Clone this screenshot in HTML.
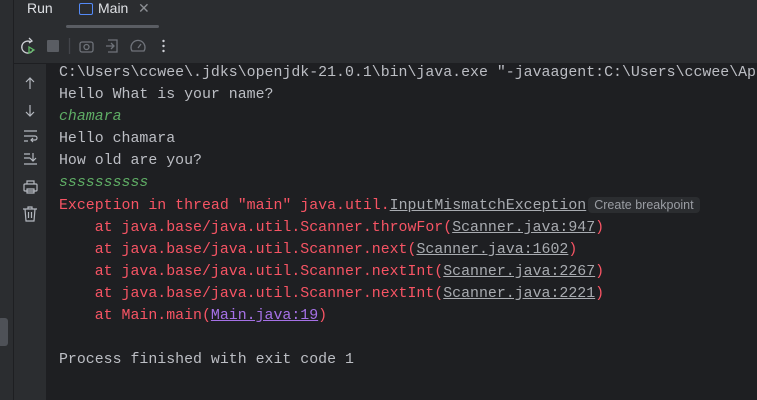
<!DOCTYPE html>
<html><head><meta charset="utf-8"><style>
body{margin:0;width:757px;height:400px;background:#1e1f22;overflow:hidden;font-family:"Liberation Sans",sans-serif;position:relative}
.top{position:absolute;left:0;top:0;width:757px;height:63px;background:#2b2d30;border-bottom:1px solid #1e1f22}
.strip{position:absolute;left:0;top:0;width:13px;height:400px;background:#2b2d30;border-right:1px solid #1e1f22}
.gut{position:absolute;left:14px;top:64px;width:32px;height:336px;background:#2b2d30}
.con{position:absolute;left:59px;top:62px;font-family:"Liberation Mono",monospace;font-size:14.9px;line-height:22px;color:#bcbec4;white-space:pre}
.g{color:#5fad65;font-style:italic}.r{color:#f75464}.u{color:#a8abb0;text-decoration:underline}
.m{color:#a571e6;text-decoration:underline}
.bp{font-family:"Liberation Sans",sans-serif;font-size:12.5px;color:#9a9da3;background:#2b2d30;border-radius:4px;padding:1px 6px;margin-left:2px}
svg{position:absolute}
</style></head><body>
<div class="top"></div>
<div class="strip"></div>
<div style="position:absolute;left:27px;top:0;color:#dfe1e5;font-size:14px;line-height:17px">Run</div>
<div style="position:absolute;left:79px;top:3px;width:12px;height:10px;border:1px solid #548af7;border-radius:2px"></div>
<div style="position:absolute;left:98px;top:0;color:#dfe1e5;font-size:14px;line-height:17px">Main</div>
<div style="position:absolute;left:138px;top:0;color:#8c8f94;font-size:14px;line-height:17px">✕</div>
<div style="position:absolute;left:66px;top:25px;width:93px;height:3px;background:#5a5d63;border-radius:2px"></div>
<svg width="757" height="64" style="left:0;top:0" fill="none" stroke-width="1.3">
<path d="M31 42a6 6 0 1 0 2 8" stroke="#ced0d6"/><path d="M29 38l3 3-3 2" stroke="#ced0d6"/><path d="M29 47v6l5-3z" stroke="#5fb865"/>
<rect x="47" y="40" width="12" height="12" rx="1" fill="#5a5d63" stroke="none"/>
<line x1="69.5" y1="38" x2="69.5" y2="54" stroke="#43454a"/>
<rect x="80" y="42" width="13" height="10" rx="2" stroke="#6f737a"/><circle cx="86.5" cy="47" r="2.5" stroke="#6f737a"/>
<path d="M108 40h9v12h-9M106 46h7m-2-3l3 3-3 3" stroke="#6f737a"/>
<path d="M132 51a7 7 0 1 1 12 0z M138 48l3-4" stroke="#6f737a"/>
<circle cx="163.5" cy="41" r="1.2" fill="#ced0d6" stroke="none"/><circle cx="163.5" cy="46" r="1.2" fill="#ced0d6" stroke="none"/><circle cx="163.5" cy="51" r="1.2" fill="#ced0d6" stroke="none"/>
</svg>
<div class="gut"></div>
<svg width="47" height="400" style="left:0;top:0" fill="none" stroke="#b4b8bf" stroke-width="1.2">
<path d="M30 89V78m-4 4l4-4 4 4"/>
<path d="M30 105v11m-4-4l4 4 4-4"/>
<path d="M24 131h13M24 136h11a2 2 0 0 1 0 4h-4m2-2l-2 2 2 2M24 141h4"/>
<path d="M24 154h6M24 158h6M24 164h13M33 153v8m-3-3l3 3 3-3"/>
<rect x="24" y="184" width="13" height="7" rx="1"/><path d="M27 184v-3h7v3M27 189h7v4h-7z"/>
<path d="M23 209h14M28 209v-2h4v2M25 209l1 12h8l1-12M28.5 212v6M31.5 212v6"/>
<rect x="-2" y="318" width="10" height="28" rx="3" fill="#4e5157" stroke="none"/>
</svg>
<div class="con">C:\Users\ccwee\.jdks\openjdk-21.0.1\bin\java.exe "-javaagent:C:\Users\ccwee\Ap
Hello What is your name?
<span class="g">chamara</span>
Hello chamara
How old are you?
<span class="g">ssssssssss</span>
<span class="r">Exception in thread "main" java.util.</span><span class="u">InputMismatchException</span><span class="bp">Create breakpoint</span>
<span class="r">    at java.base/java.util.Scanner.throwFor(</span><span class="u">Scanner.java:947</span><span class="r">)</span>
<span class="r">    at java.base/java.util.Scanner.next(</span><span class="u">Scanner.java:1602</span><span class="r">)</span>
<span class="r">    at java.base/java.util.Scanner.nextInt(</span><span class="u">Scanner.java:2267</span><span class="r">)</span>
<span class="r">    at java.base/java.util.Scanner.nextInt(</span><span class="u">Scanner.java:2221</span><span class="r">)</span>
<span class="r">    at Main.main(</span><span class="m">Main.java:19</span><span class="r">)</span>

Process finished with exit code 1</div>
</body></html>
